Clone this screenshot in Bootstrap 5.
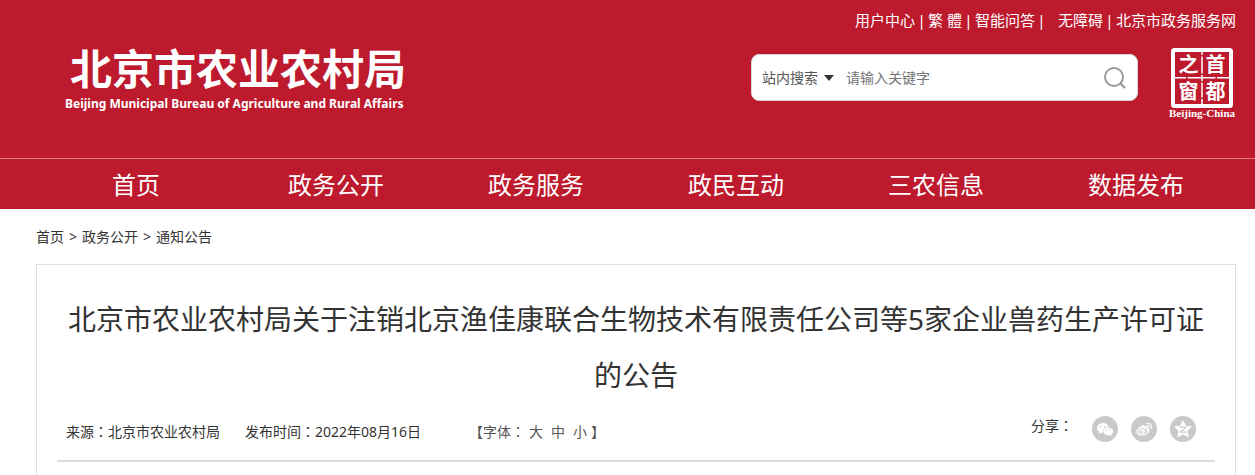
<!DOCTYPE html>
<html lang="zh-CN">
<head>
<meta charset="utf-8">
<meta name="viewport" content="width=device-width, initial-scale=1">
<title>北京市农业农村局</title>
<link rel="stylesheet" href="https://cdn.jsdelivr.net/npm/bootstrap@5.3.0/dist/css/bootstrap.min.css">
<style>
  body { font-family: "Noto Sans", "Noto Sans CJK SC", sans-serif; font-size: 14px; line-height: 20px; color: #333; }
  a { color: inherit; text-decoration: none; }
  .gutter { padding-left: 36px; padding-right: 19px; }
  .site-header { background: #bd1a2d; color: #fff; }
  .masthead { min-height: 158px; padding-bottom: 38px; }
  .brand { padding: 0 0 8px 29px; }
  .brand-cn { font-size: 42px; line-height: 48px; font-weight: 700; padding-left: 5px; margin-bottom: 3px; }
  .brand-en { font-size: 12px; line-height: 16px; font-weight: 700; }
  .top-links { font-size: 15px; line-height: 20px; padding-top: 10px; }
  .sep { width: 13px; text-align: center; }
  .sep-wide { margin-right: 10px; }
  .search { width: 387px; height: 47px; border-radius: 8px; background: #fff; border: 1px solid #d8d8d8; padding: 0 10px; margin-right: 29px; }
  .search select { appearance: none; border: 0; background: none; color: #555; padding: 0; width: 62px; }
  .search input { border: 0; outline: 0; min-width: 0; padding: 0; margin-left: 12px; }
  .search input::placeholder { color: #757575; opacity: 1; }
  .main-nav { border-top: 1px solid #df7f88; }
  .main-nav a { font-size: 24px; line-height: 48px; padding: 2px 0 0; color: #fff; }
  .crumbs { padding-top: 18px; padding-bottom: 17px; }
  .crumbs ol { gap: 5px; }
  .article { border: 1px solid #ddd; border-bottom: 0; padding: 26px 20px 0; }
  .article h1 { font-size: 28px; line-height: 56px; font-weight: 400; margin: 0; text-align: center; }
  .meta { padding: 13px 9px 18px; border-bottom: 2px solid #ddd; }
  .meta-info { column-gap: 25px; padding-top: 6px; }
  .colon { font-family: "Noto Sans CJK TC", sans-serif; line-height: 14px; }
  .type-size { color: #555; margin-left: 23px; }
  .type-size button { border: 0; background: none; padding: 0; color: inherit; }
  .type-size div { gap: 8px; margin: 0 4px; }
  .share { gap: 13px; padding-right: 10px; }
  .share-label { padding: 0 6px 0 0; }
</style>
</head>
<body class="d-flex flex-column min-vh-100">
<header class="site-header">
  <div class="masthead gutter d-flex flex-wrap justify-content-between align-items-end">
    <a href="#" class="brand d-block">
      <div class="brand-cn">北京市农业农村局</div>
      <div class="brand-en">Beijing Municipal Bureau of Agriculture and Rural Affairs</div>
    </a>
    <div class="d-flex flex-column align-items-end align-self-start">
      <div class="top-links d-flex flex-wrap">
        <a href="#">用户中心</a><span class="sep">|</span>
        <a href="#">繁 體</a><span class="sep">|</span>
        <a href="#">智能问答</a><span class="sep sep-wide">|</span>
        <a href="#">无障碍</a><span class="sep">|</span>
        <a href="#">北京市政务服务网</a>
      </div>
      <div class="d-flex align-items-start mt-3">
        <form class="search d-flex align-items-center mt-2">
          <select aria-label="搜索范围"><option>站内搜索</option></select>
          <svg width="10" height="6" viewBox="0 0 10 6" aria-hidden="true"><path d="M0 0h10L5 6z" fill="#333"/></svg>
          <input class="flex-grow-1" type="text" placeholder="请输入关键字" aria-label="请输入关键字">
          <button type="button" class="btn p-0 border-0 d-flex" aria-label="搜索">
            <svg width="24" height="24" viewBox="0 0 24 24" fill="none" stroke="#999" stroke-width="2"><circle cx="11" cy="11" r="9"/><path d="M17 17l5 5" stroke-width="2.4"/></svg>
          </button>
        </form>
        <a href="#" aria-label="首都之窗">
          <svg class="d-block" width="69" height="74" viewBox="0 0 69 74" fill="#fff">
            <rect x="6" y="4" width="58" height="56" rx="1.500" fill="none" stroke="#fff" stroke-width="4"/>
            <path d="M8 31.700h11m1.500 0h28m1.500 0h12M35 6v3m0 1.500v17m0 1.500v6m0 1.500v15m0 1.500v6" stroke="#fff" stroke-width="1.500"/>
            <g font-family="Noto Sans CJK SC, sans-serif" font-weight="700" font-size="20" text-anchor="middle">
              <text x="21.500" y="26">之</text><text x="48.500" y="26">首</text><text x="21.500" y="53">窗</text><text x="48.500" y="53">都</text>
            </g>
            <text x="35" y="71" font-family="Liberation Serif, serif" font-weight="700" font-size="11" text-anchor="middle">Beijing-China</text>
          </svg>
        </a>
      </div>
    </div>
  </div>
  <nav class="main-nav gutter" aria-label="主导航">
    <div class="nav nav-justified row-cols-6">
      <a class="nav-link" href="#">首页</a><a class="nav-link" href="#">政务公开</a><a class="nav-link" href="#">政务服务</a><a class="nav-link" href="#">政民互动</a><a class="nav-link" href="#">三农信息</a><a class="nav-link" href="#">数据发布</a>
    </div>
  </nav>
</header>
<nav class="crumbs gutter" aria-label="当前位置">
  <ol class="list-unstyled d-flex mb-0">
    <li><a href="#">首页</a></li><li>&gt;</li><li><a href="#">政务公开</a></li><li>&gt;</li><li><a href="#">通知公告</a></li>
  </ol>
</nav>
<main class="gutter flex-grow-1 d-flex flex-column">
  <article class="article flex-grow-1">
    <h1>北京市农业农村局关于注销北京渔佳康联合生物技术有限责任公司等5家企业兽药生产许可证的公告</h1>
    <div class="meta d-flex flex-wrap justify-content-between align-items-start">
      <div class="meta-info d-flex flex-wrap">
        <span>来源<span class="colon" lang="zh-TW">：</span>北京市农业农村局</span>
        <span>发布时间<span class="colon" lang="zh-TW">：</span>2022年08月16日</span>
        <div class="type-size d-flex"><span>【字体<span class="colon" lang="zh-TW">：</span></span><div class="d-flex"><button type="button">大</button><button type="button">中</button><button type="button">小</button></div>】</div>
      </div>
      <div class="share d-flex">
        <span class="share-label">分享<span class="colon" lang="zh-TW">：</span></span>
        <a href="#" aria-label="微信">
          <svg class="d-block" width="26" height="26" viewBox="0 0 26 26"><circle cx="13" cy="13" r="13" fill="#c9c9c9"/><path d="M11 7c-3.400 0-6 2.200-6 5 0 1.600.8 2.900 2.200 3.800L6.600 18l2.400-1.300 2 .3c3.400 0 6-2.200 6-5s-2.600-5-6-5z" fill="#fff"/><path d="M16.300 11.300c-2.800 0-5 1.900-5 4.200s2.200 4.200 5 4.200l1.800-.3 2 1.100-.5-1.900c1.200-.8 1.900-1.900 1.900-3.100 0-2.300-2.300-4.200-5.200-4.200z" fill="#fff" stroke="#c9c9c9" stroke-width=".7"/><g fill="#c9c9c9"><circle cx="9" cy="10.500" r=".8"/><circle cx="13" cy="10.500" r=".8"/><circle cx="14.600" cy="14.300" r=".7"/><circle cx="18" cy="14.300" r=".7"/></g></svg>
        </a>
        <a href="#" aria-label="微博">
          <svg class="d-block" width="26" height="26" viewBox="0 0 26 26"><circle cx="13" cy="13" r="13" fill="#c9c9c9"/><path d="M11.500 9.200c1.200-.6 2.300-.3 2 1.200 1.800-.7 3.500-.4 2.900 1.500 1.500.5 2.300 1.400 2.100 2.700-.3 2.900-3.600 5-7.200 5-3.300 0-5.900-1.500-5.900-3.900 0-2.300 3.300-5.300 6.100-6.500z" fill="#fff"/><ellipse cx="11.600" cy="15.300" rx="4.600" ry="3.100" fill="#c9c9c9"/><ellipse cx="11.200" cy="15.500" rx="2.900" ry="2.400" fill="#fff"/><circle cx="10.700" cy="15.800" r="1.200" fill="#c9c9c9"/><path d="M15.800 7.400c3.100-.7 5.500 1.800 4.600 5M16.100 9.700c1.600-.3 2.600.8 2.200 2.300" fill="none" stroke="#fff" stroke-width="1.100" stroke-linecap="round"/></svg>
        </a>
        <a href="#" aria-label="QQ空间">
          <svg class="d-block" width="26" height="26" viewBox="0 0 26 26"><circle cx="13" cy="13" r="13" fill="#c9c9c9"/><path d="M13 4.800l2.500 5.200 5.700.8-4.100 4 1 5.800-5.100-2.800-5.100 2.800 1-5.800-4.100-4 5.700-.8z" fill="#fff" stroke="#fff" stroke-linejoin="round"/><path d="M9.500 11.200h6.600l-5.600 4.700c2.100.4 4.300.4 6.300 0" fill="none" stroke="#c9c9c9" stroke-width="1.200"/></svg>
        </a>
      </div>
    </div>
  </article>
</main>
<script src="https://cdn.jsdelivr.net/npm/bootstrap@5.3.0/dist/js/bootstrap.bundle.min.js"></script>
</body>
</html>
